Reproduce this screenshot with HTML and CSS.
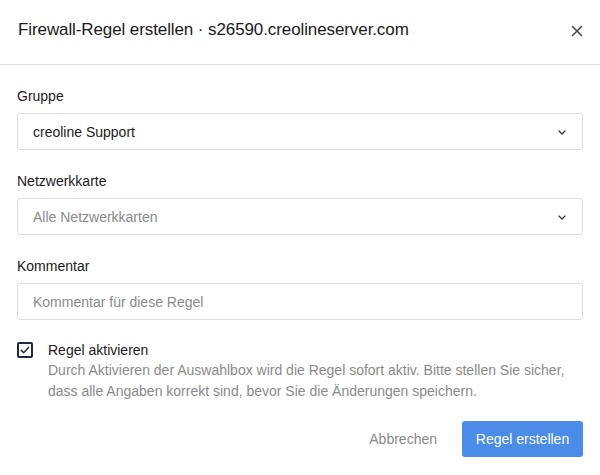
FILE: index.html
```html
<!DOCTYPE html>
<html lang="de">
<head>
<meta charset="utf-8">
<link rel="stylesheet" href="styles.css">
</head>
<body>
<div class="modal">
  <header class="modal-header">
    <h1 class="modal-title">Firewall-Regel erstellen · s26590.creolineserver.com</h1>
    <button class="close" aria-label="Schließen">
      <svg width="12" height="12" viewBox="0 0 12 12"><path d="M1.5 1.5l9 9M10.5 1.5l-9 9" stroke="#4a4a4a" stroke-width="1.6" stroke-linecap="round"/></svg>
    </button>
  </header>
  <div class="modal-body">
    <div class="field">
      <label class="label">Gruppe</label>
      <div class="control select">
        <span class="value">creoline Support</span>
        <svg class="chev" width="8" height="5" viewBox="0 0 8 5"><path d="M1 1l3 3 3-3" fill="none" stroke="#333" stroke-width="1.2" stroke-linecap="round" stroke-linejoin="round"/></svg>
      </div>
    </div>
    <div class="field">
      <label class="label">Netzwerkkarte</label>
      <div class="control select">
        <span class="placeholder">Alle Netzwerkkarten</span>
        <svg class="chev" width="8" height="5" viewBox="0 0 8 5"><path d="M1 1l3 3 3-3" fill="none" stroke="#333" stroke-width="1.2" stroke-linecap="round" stroke-linejoin="round"/></svg>
      </div>
    </div>
    <div class="field">
      <label class="label">Kommentar</label>
      <div class="control">
        <span class="placeholder">Kommentar für diese Regel</span>
      </div>
    </div>
    <div class="check-row">
      <span class="checkbox">
        <svg width="10" height="8" viewBox="0 0 10 8"><path d="M1.2 4.2l2.5 2.5 5-5.4" fill="none" stroke="#1f2937" stroke-width="1.4" stroke-linecap="round" stroke-linejoin="round"/></svg>
      </span>
      <div class="check-text">
        <div class="check-label">Regel aktivieren</div>
        <p class="check-desc">Durch Aktivieren der Auswahlbox wird die Regel sofort aktiv. Bitte stellen Sie sicher, dass alle Angaben korrekt sind, bevor Sie die Änderungen speichern.</p>
      </div>
    </div>
    <div class="actions">
      <button class="btn btn-link">Abbrechen</button>
      <button class="btn btn-primary">Regel erstellen</button>
    </div>
  </div>
</div>
</body>
</html>
```
FILE: styles.css
```css
* { box-sizing: border-box; }
html, body { margin: 0; background: #fff; }
body {
  font-family: "Helvetica Neue", "Liberation Sans", Arial, sans-serif;
  color: #1a1a1a;
  width: 600px;
  height: 475px;
  overflow: hidden;
}
.modal { width: 600px; }
.modal-header {
  height: 65px;
  border-bottom: 1px solid #dcdcdc;
  display: flex;
  align-items: center;
  justify-content: space-between;
  padding: 0 18px 4px 18px;
}
.modal-title {
  margin: 0;
  font-size: 17px;
  font-weight: 400;
  color: #1a1a1a;
  letter-spacing: -0.1px;
}
.close {
  border: 0;
  background: none;
  padding: 0;
  display: flex;
  width: 12px;
  height: 12px;
  margin-right: -1px;
  margin-top: 2px;
}
.modal-body { padding: 22px 17px 0 17px; }
.field { margin-bottom: 22px; }
.label {
  display: block;
  font-size: 14px;
  color: #1a1a1a;
  line-height: 18px;
  margin-bottom: 8px;
}
.control {
  height: 37px;
  border: 1px solid #dedede;
  border-radius: 3px;
  display: flex;
  align-items: center;
  justify-content: space-between;
  padding: 0 16px 0 15px;
  font-size: 14px;
}
.value { color: #1a1a1a; }
.placeholder { color: #8a8a8a; }
.chev { margin-top: 1px; }
.check-row {
  display: flex;
  gap: 15px;
  margin-top: -2px;
}
.checkbox {
  flex: none;
  width: 16px;
  height: 16px;
  border: 2px solid #1f2937;
  border-radius: 2px;
  display: flex;
  align-items: center;
  justify-content: center;
  margin-top: 2px;
}
.check-label {
  font-size: 14px;
  line-height: 20px;
  color: #1a1a1a;
}
.check-desc {
  margin: 0;
  font-size: 14px;
  line-height: 21px;
  color: #8a8a8a;
}
.actions {
  display: flex;
  justify-content: flex-end;
  align-items: center;
  gap: 25px;
  margin-top: 19px;
}
.btn {
  font-family: inherit;
  font-size: 14px;
  border: 0;
  cursor: pointer;
}
.btn-link {
  background: none;
  color: #8a8a8a;
  padding: 0;
}
.btn-primary {
  background: #4a8ce8;
  color: #fff;
  height: 36px;
  width: 121px;
  border-radius: 3px;
}
```
